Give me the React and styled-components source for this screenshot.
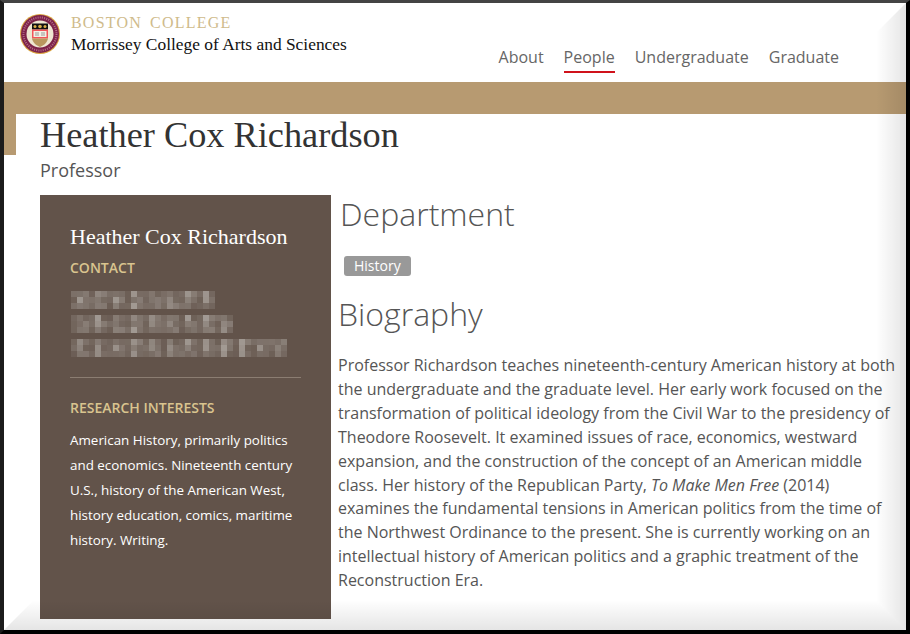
import styled, { createGlobalStyle } from "styled-components";

const GlobalStyle = createGlobalStyle`
    html, body {
        margin: 0;
        background: #fff;
    }
`;

const navItems = ["About", "People", "Undergraduate", "Graduate"];

// contact details are pixelated in the screenshot, so they are drawn as mosaic rows
const mosaicRows = [24, 27, 36];
const bandStrength = [0.45, 1, 0.6];

function cellColor(row, col) {
    const n = Math.abs(Math.sin((row + 1) * 71.3 + col * 12.9898) * 43758.5453) % 1;
    const mix = (0.25 + n * 0.55) * bandStrength[col % 3];
    const r = Math.round(98 + (178 - 98) * mix);
    const g = Math.round(83 + (172 - 83) * mix);
    const b = Math.round(74 + (166 - 74) * mix);
    return `rgb(${r},${g},${b})`;
}

function Seal() {
    return (
        <SealSvg viewBox="0 0 40 40">
            <circle cx="20" cy="20" r="20" fill="#d9a441" />
            <circle cx="20" cy="20" r="19" fill="#7d2249" />
            <circle cx="20" cy="20" r="16.5" fill="none" stroke="#b5708a" strokeWidth="2" strokeDasharray="1 1.2" />
            <circle cx="20" cy="20" r="13.5" fill="#efe6d2" />
            <path d="M12 9.500h16v6H12z" fill="#111" />
            <circle cx="15" cy="12.500" r="1.500" fill="#d9b04a" />
            <circle cx="20" cy="12.500" r="1.800" fill="#d9b04a" />
            <circle cx="25" cy="12.500" r="1.500" fill="#d9b04a" />
            <path d="M12 15.500h16v9H12z" fill="#f2545b" />
            <path d="M13.500 17h13v6h-13z" fill="#f3efe6" />
            <path d="M15 19h4M21 19h4M15 21h4M21 21h4" stroke="#777" strokeWidth="0.7" />
            <path d="M12 24.500h16c-.8 4-4 7-8 8.500-4-1.500-7.200-4.500-8-8.500z" fill="#b9975f" />
        </SealSvg>
    );
}

export default function App() {
    return (
        <Frame>
            <GlobalStyle />
            <Header>
                <Logo>
                    <Seal />
                    <LogoText>
                        <School>Boston College</School>
                        <College>Morrissey College of Arts and Sciences</College>
                    </LogoText>
                </Logo>
                <Nav>
                    {navItems.map((item) => (
                        <NavLink key={item} $active={item === "People"}>{item}</NavLink>
                    ))}
                </Nav>
            </Header>
            <Band />
            <TitleBlock>
                <Name>Heather Cox Richardson</Name>
            </TitleBlock>
            <Role>Professor</Role>
            <Columns>
                <Sidebar>
                    <SideName>Heather Cox Richardson</SideName>
                    <SideLabel>CONTACT</SideLabel>
                    <Mosaic>
                        {mosaicRows.map((count, row) => (
                            <MosaicRow key={row} $cols={count}>
                                {Array.from({ length: count * 3 }, (_, col) => (
                                    <MosaicCell key={col} style={{ background: cellColor(row, col) }} />
                                ))}
                            </MosaicRow>
                        ))}
                    </Mosaic>
                    <Rule />
                    <SideLabel>RESEARCH INTERESTS</SideLabel>
                    <Interests>
                        American History, primarily politics and economics. Nineteenth century U.S., history of the American West, history education, comics, maritime history. Writing.
                    </Interests>
                </Sidebar>
                <Main>
                    <Department>Department</Department>
                    <Badge>History</Badge>
                    <Biography>Biography</Biography>
                    <Bio>
                        Professor Richardson teaches nineteenth-century American history at both the undergraduate and the graduate level. Her early work focused on the transformation of political ideology from the Civil War to the presidency of Theodore Roosevelt. It examined issues of race, economics, westward expansion, and the construction of the concept of an American middle class. Her history of the Republican Party, <em>To Make Men Free</em> (2014) examines the fundamental tensions in American politics from the time of the Northwest Ordinance to the present. She is currently working on an intellectual history of American politics and a graphic treatment of the Reconstruction Era.
                    </Bio>
                </Main>
            </Columns>
        </Frame>
    );
}

const Frame = styled.div`
    position: relative;
    width: 910px;
    height: 634px;
    box-sizing: border-box;
    overflow: hidden;
    background: #fff;
    border-style: solid;
    border-width: 3px 4px 4px 4px;
    border-color: #444 #000 #000 #1c1c1c;
    font-family: "Open Sans", sans-serif;

    /* bevel of the screenshot frame, mitred at the corners */
    &::before {
        content: "";
        position: absolute;
        right: 0;
        top: 0;
        bottom: 0;
        width: 30px;
        pointer-events: none;
        background: linear-gradient(to left, rgba(0, 0, 0, 0.1), rgba(0, 0, 0, 0));
        clip-path: polygon(100% 0, 100% 100%, 0 calc(100% - 30px), 0 30px);
    }

    &::after {
        content: "";
        position: absolute;
        left: 0;
        right: 0;
        bottom: 0;
        height: 30px;
        pointer-events: none;
        background: linear-gradient(to top, rgba(0, 0, 0, 0.1), rgba(0, 0, 0, 0));
        clip-path: polygon(0 100%, 100% 100%, calc(100% - 30px) 0, 30px 0);
    }
`;

const Header = styled.header`
    height: 79px;
    display: flex;
    justify-content: space-between;
    box-sizing: border-box;
    padding: 11px 67px 0 16px;
`;

const Logo = styled.div`
    display: flex;
    gap: 11px;
`;

const SealSvg = styled.svg`
    width: 40px;
    height: 40px;
    flex: none;
`;

const LogoText = styled.div`
    font-family: "Liberation Serif", serif;
`;

const School = styled.div`
    font-size: 16px;
    line-height: 17px;
    text-transform: uppercase;
    letter-spacing: 1.2px;
    word-spacing: 3px;
    color: #cfbb8b;
`;

const College = styled.div`
    font-size: 17.4px;
    line-height: 20px;
    margin-top: 3px;
    color: #111;
`;

const Nav = styled.nav`
    display: flex;
    gap: 20px;
    padding-top: 30px;
`;

const NavLink = styled.a`
    height: 27px;
    font-size: 16px;
    line-height: 26px;
    color: #666;
    border-bottom: 2px solid ${(p) => (p.$active ? "#d0121b" : "transparent")};
`;

const Band = styled.div`
    height: 32px;
    background: #b79a71;
`;

const TitleBlock = styled.div`
    height: 41px;
    box-sizing: border-box;
    border-left: 12px solid #b79a71;
    padding-left: 24px;
`;

const Name = styled.h1`
    margin: 0;
    font-family: "Liberation Serif", serif;
    font-weight: 400;
    font-size: 36.3px;
    line-height: 43px;
    color: #333;
    white-space: nowrap;
`;

const Role = styled.div`
    margin-left: 36px;
    height: 40px;
    font-size: 18px;
    line-height: 31px;
    color: #555;
`;

const Columns = styled.div`
    display: flex;
    margin-left: 36px;
`;

const Sidebar = styled.aside`
    width: 291px;
    height: 424px;
    box-sizing: border-box;
    flex: none;
    padding: 28px 30px 0;
    background: #62534a;
    color: #fff;
`;

const SideName = styled.div`
    font-family: "Liberation Serif", serif;
    font-size: 22px;
    line-height: 28px;
`;

const SideLabel = styled.div`
    font-size: 14px;
    font-weight: 600;
    line-height: 20px;
    margin-top: 7px;
    color: #d9c48f;
`;

const Mosaic = styled.div`
    display: flex;
    flex-direction: column;
    gap: 6px;
    margin-top: 13px;
    margin-left: 1px;
`;

const MosaicRow = styled.div`
    display: grid;
    grid-template-columns: repeat(${(p) => p.$cols}, 6px);
    grid-auto-rows: 6px;
`;

const MosaicCell = styled.i`
    display: block;
`;

const Rule = styled.hr`
    margin: 20px 0 20px;
    border: 0;
    border-top: 1px solid #8b7d72;
`;

const Interests = styled.p`
    margin: 10px 0 0;
    font-size: 13.4px;
    line-height: 25px;
`;

const Main = styled.main`
    flex: 1;
    padding-left: 7px;
    min-width: 0;
`;

const Department = styled.h2`
    margin: -1px 0 0 2px;
    font-size: 32px;
    font-weight: 300;
    line-height: 40px;
    color: #555;
`;

const Badge = styled.span`
    display: inline-block;
    margin: 22px 0 0 6px;
    padding: 0 10px;
    height: 20px;
    font-size: 14px;
    line-height: 20px;
    border-radius: 3px;
    background: #999;
    color: #fff;
`;

const Biography = styled.h2`
    margin: 16px 0 0;
    font-size: 32px;
    font-weight: 300;
    line-height: 44px;
    color: #555;
`;

const Bio = styled.p`
    margin: 18px 0 0;
    width: 560px;
    font-size: 16px;
    line-height: 23.9px;
    color: #555;
`;
